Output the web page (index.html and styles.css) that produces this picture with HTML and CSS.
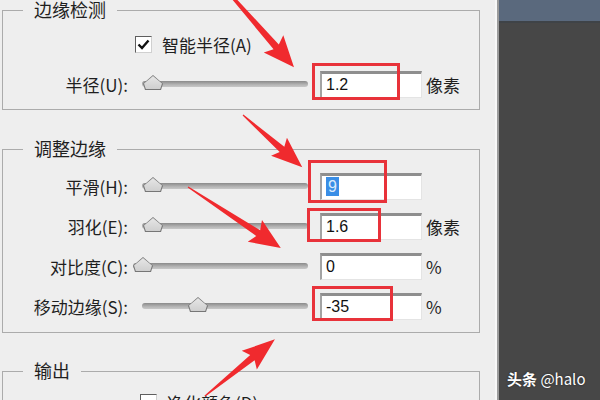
FILE: index.html
```html
<!DOCTYPE html>
<html lang="zh-CN">
<head>
    <meta charset="UTF-8">
    <meta name="viewport" content="width=device-width, initial-scale=1.0">
    <title>调整边缘</title>
    <link rel="stylesheet" href="styles.css">
</head>
<body>
    <div class="screen">
        <div class="panel">
            <fieldset class="group group-detect">
                <legend>边缘检测</legend>
                <div class="check-row">
                    <span class="checkbox">
                        <svg width="17" height="17" viewBox="0 0 17 17"><path d="M3.5 8.5 L7 12 L13.5 4.5" fill="none" stroke="#111" stroke-width="2.4"/></svg>
                    </span>
                    <span>智能半径(A)</span>
                </div>
                <div class="row">
                    <label>半径(U):</label>
                    <div class="slider"><span class="thumb" style="left: 1px"></span></div>
                    <div class="field">1.2</div>
                    <span class="unit">像素</span>
                </div>
            </fieldset>

            <fieldset class="group group-adjust">
                <legend>调整边缘</legend>
                <div class="row">
                    <label>平滑(H):</label>
                    <div class="slider"><span class="thumb" style="left: 1px"></span></div>
                    <div class="field"><span class="selected">9</span></div>
                    <span class="unit"></span>
                </div>
                <div class="row">
                    <label>羽化(E):</label>
                    <div class="slider"><span class="thumb" style="left: 1px"></span></div>
                    <div class="field">1.6</div>
                    <span class="unit">像素</span>
                </div>
                <div class="row">
                    <label>对比度(C):</label>
                    <div class="slider slider-wide"><span class="thumb" style="left: 0px"></span></div>
                    <div class="field">0</div>
                    <span class="unit">%</span>
                </div>
                <div class="row">
                    <label>移动边缘(S):</label>
                    <div class="slider"><span class="thumb" style="left: 46px"></span></div>
                    <div class="field">-35</div>
                    <span class="unit">%</span>
                </div>
            </fieldset>

            <fieldset class="group group-output">
                <legend>输出</legend>
                <div class="check-row check-row-output">
                    <span class="checkbox"></span>
                    <span>净化颜色(D)</span>
                </div>
            </fieldset>
        </div>

        <div class="side">
            <div class="side-bar"></div>
            <div class="watermark"><b>头条</b> @halo</div>
        </div>

        <!-- annotations drawn over the dialog -->
        <svg class="marks" width="600" height="400" viewBox="0 0 600 400">
            <g fill="none" stroke="#e8323a" stroke-width="3">
                <rect x="313.5" y="64.5" width="85" height="34"/>
                <rect x="309.5" y="161.5" width="76" height="40"/>
                <rect x="308.5" y="209.5" width="71" height="31"/>
                <rect x="313.5" y="287.5" width="78" height="32"/>
            </g>
            <g fill="#f02a2e">
                <polygon transform="translate(228 -8) rotate(48.7)" points="0,-1.5 73,-3.5 69,-13 100,0 69,13 73,3.5 0,1.5"/>
                <polygon transform="translate(243 115) rotate(41.4)" points="0,-0.6 52,-3.5 48,-12 79,0 48,12 52,3.5 0,0.6"/>
                <polygon transform="translate(188 187) rotate(33.3)" points="0,-0.6 84,-3.5 80,-13 111,0 80,13 84,3.5 0,0.6"/>
                <polygon transform="translate(205 396) rotate(-39)" points="0,-0.6 61,-3.5 57,-12 90,0 57,12 61,3.5 0,0.6"/>
            </g>
        </svg>
    </div>
</body>
</html>
```

FILE: styles.css
```css
* {
    box-sizing: border-box;
}

body {
    margin: 0;
    width: 600px;
    height: 400px;
    overflow: hidden;
    font-family: "Noto Sans CJK SC", "Noto Sans", sans-serif;
    color: #1f1f1f;
}

.screen {
    position: relative;
    display: flex;
    height: 400px;
}

.panel {
    width: 499px;
    height: 400px;
    overflow: hidden;
    background: #eeeeee;
    border-right: 2px solid #9b9b9b;
    box-shadow: inset -2px 0 #f7f7f7;
}

/* group boxes */
.group {
    margin: 0 0 0 2px;
    width: 478px;
    padding: 0;
    border: 1px solid #ababab;
}

.group legend {
    margin-left: 20px;
    padding: 0 11px 2px;
    font-size: 18px;
    line-height: 20px;
}

.group-detect {
    margin-top: -1px;
    padding: 3px 0 5px;
}

.group-adjust {
    margin-top: 28px;
    padding: 6px 0 6px;
}

.group-output {
    margin-top: 27px;
    padding: 0;
}

/* checkbox rows */
.check-row {
    display: flex;
    align-items: center;
    gap: 10px;
    height: 40px;
    padding-left: 132px;
    font-size: 17px;
}

.check-row-output {
    padding-left: 137px;
}

.checkbox {
    width: 17px;
    height: 17px;
    background: #fff;
    border-top: 1px solid #5e5e5e;
    border-left: 1px solid #5e5e5e;
    border-right: 1px solid #d0d0d0;
    border-bottom: 1px solid #d0d0d0;
}

.checkbox svg {
    display: block;
    margin: -1px 0 0 -1px;
}

/* slider rows */
.row {
    display: grid;
    grid-template-columns: 126px 179px 114px auto;
    align-items: center;
    height: 40px;
    font-size: 17px;
}

.row label {
    text-align: right;
    padding-right: 1px;
    white-space: nowrap;
}

.slider {
    position: relative;
    height: 6px;
    margin-left: 13px;
    border-radius: 3px;
    background: linear-gradient(#8a8a8a, #b4b4b4 60%, #c8c8c8);
}

.slider-wide {
    margin-left: 4px;
}

.thumb {
    position: absolute;
    top: -6px;
    width: 20px;
    height: 15px;
    background: #767676;
    clip-path: polygon(10% 100%, 90% 100%, 100% 58%, 50% 0, 0 58%);
}

.thumb::after {
    content: "";
    position: absolute;
    inset: 1px;
    background: linear-gradient(#e6e6e6, #cfcfcf);
    clip-path: polygon(10% 100%, 90% 100%, 100% 58%, 50% 0, 0 58%);
}

.field {
    width: 102px;
    height: 27px;
    margin-left: 12px;
    padding-left: 4px;
    background: #fff;
    border-top: 3px solid #8e8e8e;
    border-left: 2px solid #a3a3a3;
    border-right: 1px solid #e4e4e4;
    border-bottom: 1px solid #e4e4e4;
    font-family: "Liberation Sans", Arial, sans-serif;
    font-size: 16px;
    line-height: 22px;
    color: #111;
}

.selected {
    background: #3a8ee6;
    color: #dcebfb;
    padding: 1px 2px;
}

.unit {
    margin-left: 4px;
}

/* dark workspace on the right */
.side {
    position: relative;
    flex: 1;
    background: #474747;
}

.side-bar {
    height: 23px;
    background: #5a697d;
    border-bottom: 2px solid #3f4347;
}

.watermark {
    position: absolute;
    left: 8px;
    top: 368px;
    color: #fff;
    font-size: 15px;
    white-space: nowrap;
    text-shadow: 0 0 2px #222;
}

.marks {
    position: absolute;
    left: 0;
    top: 0;
    pointer-events: none;
}
```
